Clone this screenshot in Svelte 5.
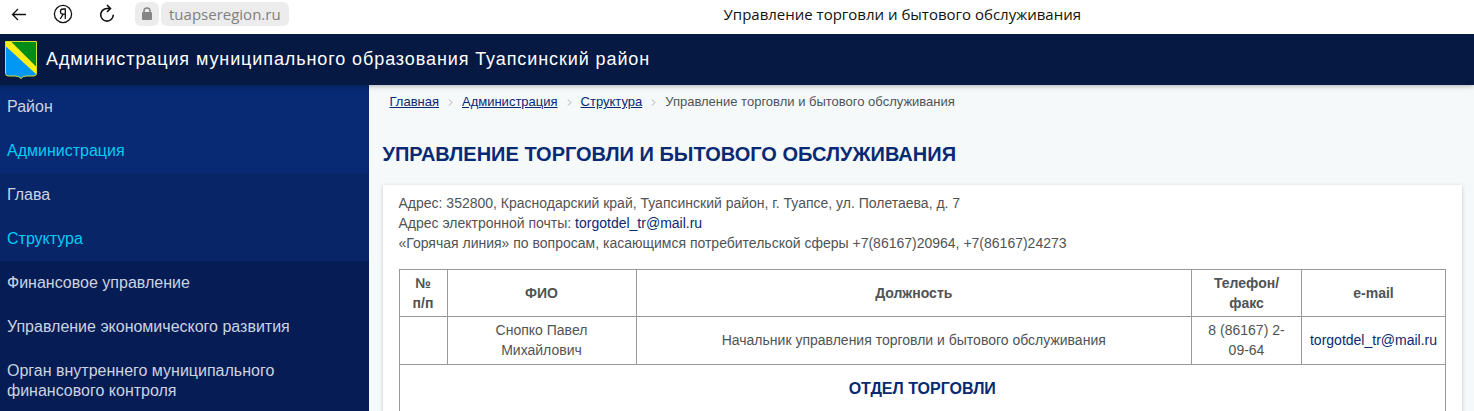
<script>
  const menu = [
    { text: 'Район', level: 1 },
    { text: 'Администрация', level: 1, active: true },
    { text: 'Глава', level: 2 },
    { text: 'Структура', level: 2, active: true },
    { text: 'Финансовое управление', level: 3 },
    { text: 'Управление экономического развития', level: 3 },
    { text: 'Орган внутреннего муниципального финансового контроля', level: 3 }
  ];
  const crumbs = ['Главная', 'Администрация', 'Структура'];
</script>

<div class="shell">
  <div class="browser">
    <button aria-label="Назад">
      <svg width="16" height="16" viewBox="0 0 16 16"><path d="M15 8.500H1.500M7 3L1.500 8.500 7 14" /></svg>
    </button>
    <button aria-label="Яндекс">
      <svg width="20" height="20" viewBox="0 0 20 20"><circle cx="10" cy="10" r="8.600" /><path d="M12.300 15V5H10.200C8.400 5 7.400 6.100 7.400 7.600c0 1.500.9 2.500 2.600 2.500h2.300M10.200 10.100 7.200 15" /></svg>
    </button>
    <button class="reload" aria-label="Обновить">
      <svg width="16" height="20" viewBox="0 0 16 20"><path d="M11.500 4.500H8A6.300 6.300 0 1 0 14.300 10.800M8 1l3.500 3.500L8 8" /></svg>
    </button>
    <div class="address">
      <button class="lock" aria-label="Защищённое соединение">
        <svg width="12" height="14" viewBox="0 0 12 14"><path class="shackle" d="M3 6V4a3 3 0 0 1 6 0v2" /><rect x="1" y="5" width="10" height="8" rx="1" /></svg>
      </button>
      <a class="url" href="#top">tuapseregion.ru</a>
    </div>
    <div class="tabtitle">Управление торговли и бытового обслуживания</div>
  </div>

  <header>
    <svg class="crest" width="34" height="40" viewBox="0 0 34 40">
      <path d="M1.500 1.500h31v32q0 2.500-3 2.500h-7q-4 0-5.500 2.500Q15 36 11 36H4.500q-3 0-3-2.500z" fill="#0097f5" />
      <path d="M5 2h27.500v28z" fill="#008c19" />
      <path d="M1.500 1.500H7L32.500 27v7.500L1.500 6z" fill="#ffef18" />
      <path d="M1.500 1.500h31v32q0 2.500-3 2.500h-7q-4 0-5.500 2.500Q15 36 11 36H4.500q-3 0-3-2.500z" fill="none" stroke="#d5df2a" />
    </svg>
    <span>Администрация муниципального образования Туапсинский район</span>
  </header>

  <div class="body">
    <nav class="side">
      {#each menu as item}
        <a class="level{item.level}" class:active={item.active} href="#menu">{item.text}</a>
      {/each}
    </nav>
    <main>
      <nav class="crumbs">
        {#each crumbs as c}
          <a href="#crumb">{c}</a>
          <svg width="5" height="7" viewBox="0 0 5 7"><path d="M1 .5l3 3-3 3" /></svg>
        {/each}
        <span>Управление торговли и бытового обслуживания</span>
      </nav>
      <h1>УПРАВЛЕНИЕ ТОРГОВЛИ И БЫТОВОГО ОБСЛУЖИВАНИЯ</h1>
      <section class="card">
        <p>
          Адрес: 352800, Краснодарский край, Туапсинский район, г. Туапсе, ул. Полетаева, д. 7<br />
          Адрес электронной почты: <a href="mailto:torgotdel_tr@mail.ru">torgotdel_tr@mail.ru</a><br />
          «Горячая линия» по вопросам, касающимся потребительской сферы +7(86167)20964, +7(86167)24273
        </p>
        <table>
          <colgroup><col class="num" /><col class="name" /><col /><col class="phone" /><col class="mail" /></colgroup>
          <thead>
            <tr><th>№ п/п</th><th>ФИО</th><th>Должность</th><th>Телефон/ факс</th><th>e-mail</th></tr>
          </thead>
          <tbody>
            <tr>
              <td></td>
              <td class="person">Снопко Павел Михайлович</td>
              <td>Начальник управления торговли и бытового обслуживания</td>
              <td>8 (86167) 2-09-64</td>
              <td class="email"><a href="mailto:torgotdel_tr@mail.ru">torgotdel_tr@mail.ru</a></td>
            </tr>
            <tr><td class="dept" colspan="5"><h2>ОТДЕЛ ТОРГОВЛИ</h2></td></tr>
          </tbody>
        </table>
      </section>
    </main>
  </div>
</div>

<style>
  :global(body) { margin: 0; }
  .shell {
    height: 100vh;
    display: flex;
    flex-direction: column;
    overflow: hidden;
    font-family: "Liberation Sans", Arial, sans-serif;
    color: #4f5356;
    background: #f5f9fa;
  }
  a { color: #082973; text-decoration: none; }
  .browser {
    position: relative;
    z-index: 2;
    display: flex;
    align-items: center;
    flex: none;
    height: 34px;
    padding: 0 12px 6px 11px;
    box-sizing: border-box;
    gap: 26px;
    background: #fff;
    font-family: "Open Sans", "Noto Sans", sans-serif;
  }
  button {
    display: flex;
    padding: 0;
    border: 0;
    background: none;
  }
  .browser svg { fill: none; stroke: #111; stroke-width: 1.3; }
  .browser .reload svg { stroke-width: 1.6; }
  .address { display: flex; gap: 2px; margin-left: -6px; }
  .lock {
    width: 24px;
    height: 24px;
    align-items: center;
    justify-content: center;
    border-radius: 6px;
    background: #ececec;
  }
  .browser .lock svg { fill: #858585; stroke: none; }
  .browser .lock .shackle { fill: none; stroke: #858585; stroke-width: 1.5; }
  .url {
    padding: 0 8px;
    border-radius: 6px;
    background: #ececec;
    color: #808080;
    font-size: 15px;
    line-height: 24px;
  }
  .tabtitle {
    flex: 1;
    padding-left: 28px;
    text-align: center;
    font-size: 15px;
    color: #111;
  }
  header {
    position: relative;
    z-index: 1;
    flex: none;
    display: flex;
    align-items: center;
    gap: 8px;
    height: 51px;
    padding-left: 4px;
    background: #051942;
    box-shadow: 0 1px 5px rgba(0, 0, 0, 0.3);
    color: #fff;
    font-size: 18px;
    letter-spacing: 0.05em;
  }
  .body { display: flex; flex: 1; min-height: 0; }
  .side {
    flex: none;
    width: 25%;
    font-size: 16px;
    line-height: 20px;
    background: #061c54;
  }
  .side a {
    display: block;
    padding: 12px 56px 12px 7px;
    color: #ccd3e0;
  }
  .side .level1 { background: #082973; }
  .side .level2 { background: #082567; }
  .side .level3 { background: #061c54; }
  .side a.active { color: #00ccf5; }
  main { flex: 1; min-width: 0; padding: 8px 12px 0 14px; }
  .crumbs {
    display: flex;
    align-items: center;
    gap: 9px;
    padding-left: 7px;
    font-size: 13px;
    line-height: 18px;
  }
  .crumbs a { text-decoration: underline; }
  .crumbs svg { fill: none; stroke: #a9aeb2; }
  h1 {
    margin: 31px 0 18px;
    font-size: 20px;
    line-height: 25px;
    color: #082973;
  }
  .card {
    padding: 8px 16px 16px;
    background: #fff;
    box-shadow: 0 1px 4px rgba(0, 0, 0, 0.2);
    font-size: 14px;
    line-height: 20px;
  }
  p { margin: 0 0 16px; }
  table { width: 100%; table-layout: fixed; border-collapse: collapse; text-align: center; }
  th, td { padding: 3px 16px; border: 1px solid #999; }
  td { padding-bottom: 4px; }
  th:first-child { padding: 3px 8px; }
  .num { width: 48px; }
  .name { width: 189px; }
  .phone { width: 110px; }
  .mail { width: 144px; }
  .person { padding-inline: 40px; }
  .email { padding-inline: 4px; }
  .dept { padding: 14px 4px; }
  h2 { margin: 0; font-size: 16px; line-height: 20px; color: #082973; }
</style>
